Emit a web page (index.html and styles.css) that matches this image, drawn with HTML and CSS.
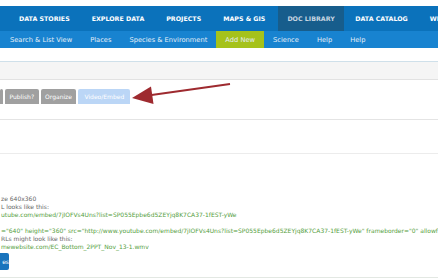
FILE: index.html
```html
<!DOCTYPE html>
<html lang="en">
<head>
  <meta charset="UTF-8">
  <meta name="viewport" content="width=device-width, initial-scale=1.0">
  <title>Doc Library - Add New</title>
  <link rel="stylesheet" href="styles.css">
</head>
<body>
  <header class="header">
    <!-- Main navigation -->
    <nav class="main-nav">
      <a href="#">DATA STORIES</a>
      <a href="#">EXPLORE DATA</a>
      <a href="#">PROJECTS</a>
      <a href="#">MAPS &amp; GIS</a>
      <a href="#" class="active">DOC LIBRARY</a>
      <a href="#">DATA CATALOG</a>
      <a href="#">WIDGETS</a>
    </nav>

    <!-- Doc library sub navigation -->
    <nav class="sub-nav">
      <a href="#">Search &amp; List View</a>
      <a href="#">Places</a>
      <a href="#">Species &amp; Environment</a>
      <a href="#" class="active">Add New</a>
      <a href="#">Science</a>
      <a href="#">Help</a>
      <a href="#">Help</a>
    </nav>
  </header>

  <div class="toolbar"></div>

  <!-- Edit tabs -->
  <div class="tabs">
    <div class="tab-row">
      <span class="tab tab-cut"></span>
      <span class="tab">Publish?</span>
      <span class="tab">Organize</span>
      <span class="tab selected">Video/Embed</span>
    </div>
  </div>

  <div class="field"></div>

  <!-- Help text for the video field -->
  <div class="notes">
    <p>ze 640x360</p>
    <p>L looks like this:</p>
    <p class="code">utube.com/embed/7jIOFVs4Uns?list=SP055Epbe6d5ZEYjq8K7CA37-1fEST-yWe</p>
    <p>&nbsp;</p>
    <p class="code">="640" height="360" src="http://www.youtube.com/embed/7jIOFVs4Uns?list=SP055Epbe6d5ZEYjq8K7CA37-1fEST-yWe" frameborder="0" allowf</p>
    <p>RLs might look like this:</p>
    <p class="code">mewebsite.com/EC_Bottom_2PPT_Nov_13-1.wmv</p>
  </div>

  <button class="save">es</button>
  <div class="footer-line"></div>

  <!-- Annotation arrow pointing at the Video/Embed tab -->
  <svg class="arrow" width="438" height="280" viewBox="0 0 438 280">
    <line x1="230" y1="84" x2="148" y2="95.5" stroke="#9e2a2f" stroke-width="2"/>
    <polygon points="132,98 151,86.5 153.5,104" fill="#9e2a2f"/>
  </svg>
</body>
</html>
```

FILE: styles.css
```css
body {
  margin: 0;
  font-family: "DejaVu Sans", Verdana, sans-serif;
  background-color: white;
  overflow: hidden;
  position: relative;
  width: 438px;
  height: 280px;
}

.header {
  padding-top: 6px;
}

.main-nav {
  display: flex;
  height: 25px;
  padding-left: 8px;
  background-color: #0b72bb;
  overflow: hidden;
  white-space: nowrap;
}

.main-nav a {
  display: flex;
  align-items: center;
  padding: 0 11px;
  color: white;
  font-size: 6.3px;
  font-weight: bold;
  text-decoration: none;
}

.main-nav a.active {
  padding: 0 9.5px;
  margin-left: 1.5px;
  background-color: #175d8c;
  color: #c6d5e1;
}

.sub-nav {
  display: flex;
  height: 17px;
  padding-left: 1px;
  background-color: #1883d0;
  white-space: nowrap;
  overflow: hidden;
}

.sub-nav a {
  display: flex;
  align-items: center;
  padding: 0 9px;
  color: #e4eef7;
  font-size: 6.7px;
  text-decoration: none;
}

.sub-nav a.active {
  background-color: #a5c21b;
}

.toolbar {
  margin-top: 13px;
  height: 17px;
  background-color: #f5f5f5;
  border-top: 1px solid #cfe0ea;
  border-bottom: 1px solid #e2e2e2;
}

.tabs {
  height: 30px;
  padding-top: 9px;
  border-bottom: 1px solid #e4e4e4;
}

.tab-row {
  display: flex;
  gap: 2px;
}

.tab {
  display: flex;
  align-items: center;
  height: 15px;
  padding: 0 4.5px;
  background-color: #a0a0a0;
  color: white;
  font-size: 6px;
  border-radius: 2px 2px 0 0;
}

.tab-cut {
  width: 3px;
  padding: 0;
}

.tab.selected {
  background-color: #bbd6f6;
  padding: 0 6px;
}

.field {
  height: 33px;
  border-bottom: 1px solid #ececec;
}

.notes {
  padding-top: 41px;
  padding-left: 1px;
  overflow: hidden;
}

.notes p {
  margin: 0;
  font-size: 6px;
  line-height: 8px;
  color: #666;
  white-space: nowrap;
}

.notes p.code {
  color: #55a03e;
}

.save {
  display: block;
  margin-top: 2px;
  height: 17px;
  width: 9px;
  padding: 0;
  border: none;
  border-radius: 0 2px 2px 0;
  background-color: #1a74bd;
  color: white;
  font-family: "DejaVu Sans", Verdana, sans-serif;
  font-size: 6px;
  text-align: right;
  overflow: hidden;
}

.footer-line {
  margin-top: 7px;
  border-top: 1px solid #e3e8e3;
}

.arrow {
  position: absolute;
  left: 0;
  top: 0;
  pointer-events: none;
}
```
